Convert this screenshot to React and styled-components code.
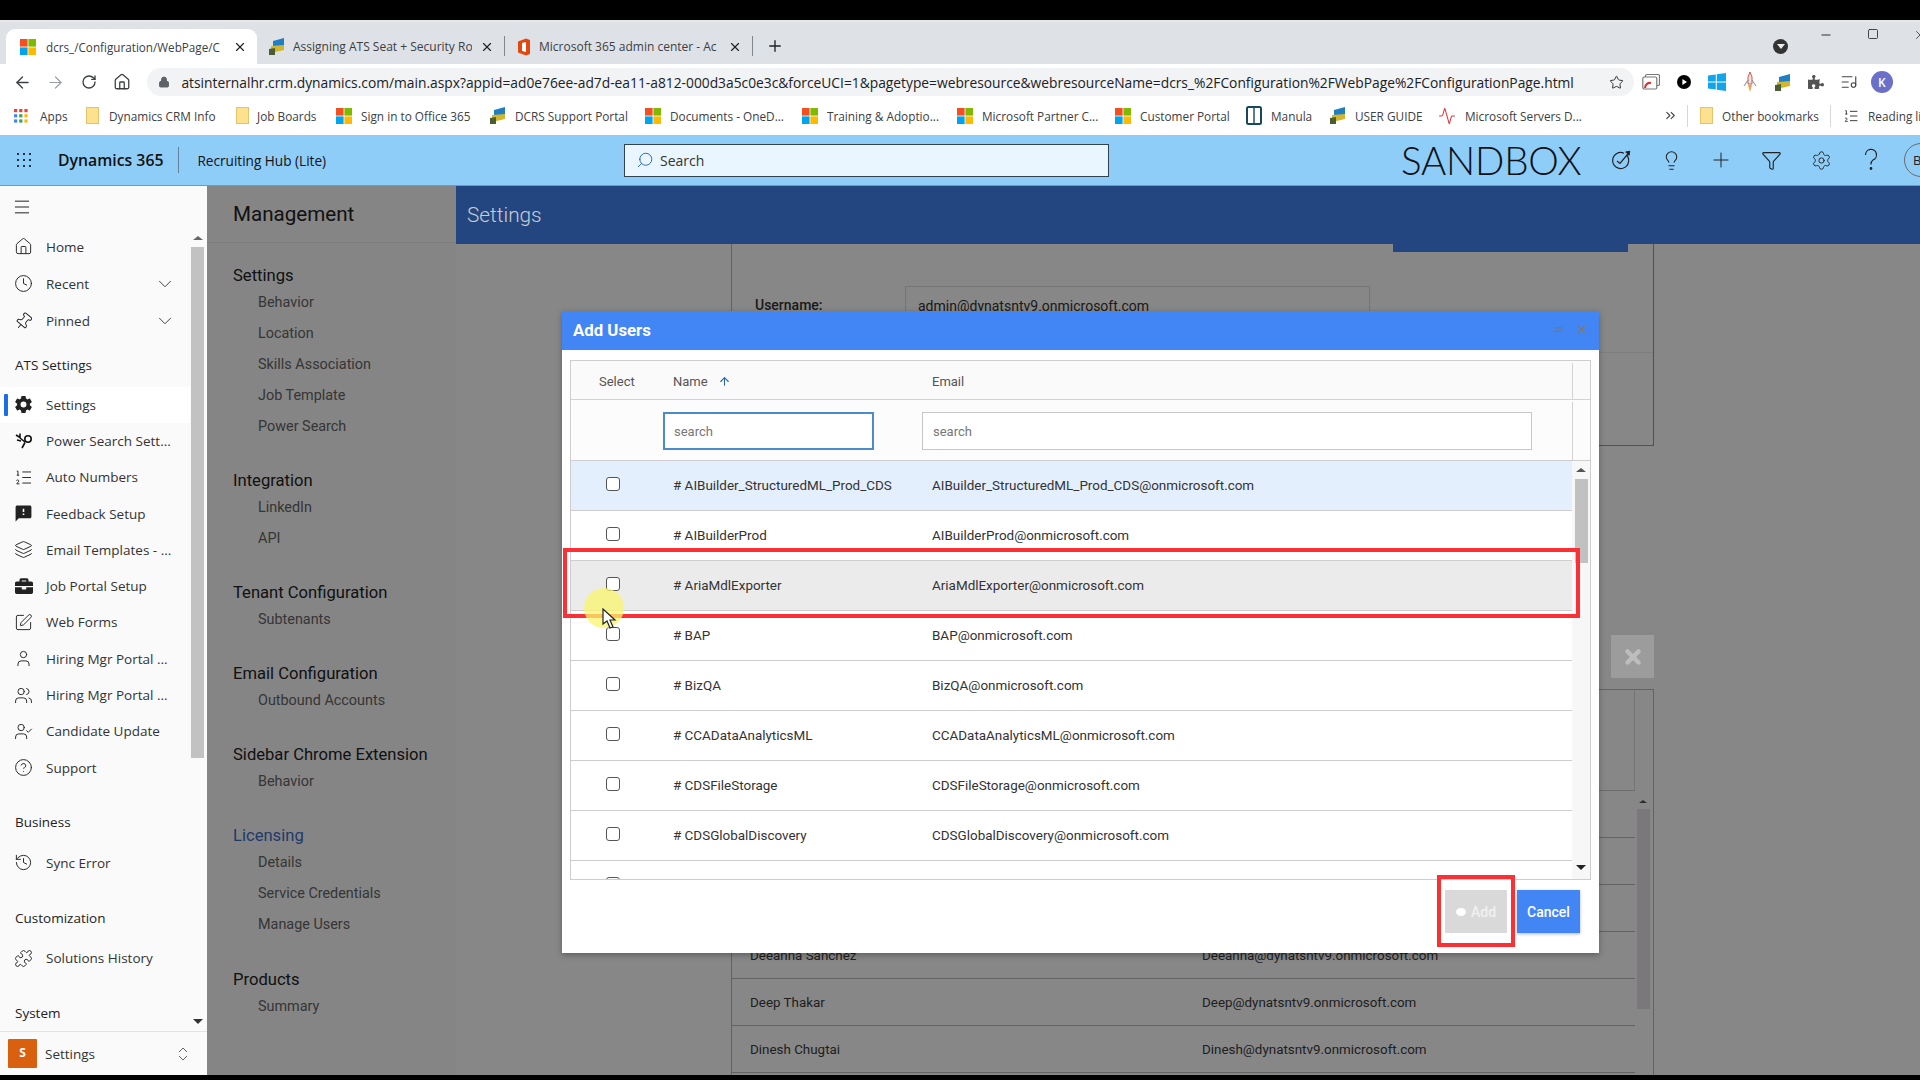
import React from 'react'
import styled, { createGlobalStyle } from 'styled-components'
import {
  Activity, ArrowLeft, ArrowRight, ArrowUp, ChevronDown, ChevronsRight, ChevronsUpDown, CircleHelp, Clock,
  Equal, Funnel, History, House, Layers, Lightbulb, ListMusic, ListOrdered, Lock, Menu, Minus, Pin, Plus, Puzzle,
  RotateCw, Search, Settings, Square, SquarePen, Star, User, UserCheck, Users, X,
} from 'lucide-react'
import { IoSettingsSharp } from 'react-icons/io5'
import { FaBriefcase, FaPuzzlePiece } from 'react-icons/fa'
import { MdFeedback } from 'react-icons/md'

const GlobalStyle = createGlobalStyle`
  html, body { margin: 0; padding: 0; background: #000; }
  * { box-sizing: border-box; }
  input { font: inherit; }
`

const Page = styled.div`
  width: 1920px;
  height: 1080px;
  padding: 20px 0 5px;
  overflow: hidden;
  display: flex;
  flex-direction: column;
  background: #000;
  font-family: 'Open Sans', 'Liberation Sans', sans-serif;
`

/* browser chrome */
const TabStrip = styled.div`
  height: 44px;
  flex-shrink: 0;
  padding-left: 6px;
  display: flex;
  align-items: flex-end;
  background: #dee1e6;
  border-top: 2px solid #e8e8ea;
`
const Tab = styled.div`
  width: ${(p) => p.$w}px;
  height: 35px;
  padding: 0 10px 0 ${(p) => (p.$active ? 14 : 12)}px;
  display: flex;
  align-items: center;
  gap: ${(p) => (p.$active ? 10 : 8)}px;
  font-size: ${(p) => (p.$active ? 11.7 : 12)}px;
  color: #3c4043;
  background: ${(p) => (p.$active ? '#fff' : 'transparent')};
  border-radius: ${(p) => (p.$active ? '9px 9px 0 0' : '0')};
  svg { flex-shrink: 0; }
`
const TabDivider = styled.div`
  width: 1px;
  height: 20px;
  margin-bottom: 8px;
  background: #80868b;
`
const TabTitle = styled.span`
  flex: 1;
  overflow: hidden;
  white-space: nowrap;
`
const NewTab = styled.div`
  margin: 0 0 9px 13px;
  display: flex;
  color: #222;
`
const WindowControls = styled.div`
  margin-left: auto;
  margin-right: -7px;
  align-self: stretch;
  display: flex;
  gap: 34px;
  padding: 6px 0 0;
  color: #333;
`
const ProfileDot = styled.div`
  width: 15px;
  height: 15px;
  margin-top: 11px;
  margin-right: -3px;
  border-radius: 50%;
  background: #333;
  display: flex;
  align-items: center;
  justify-content: center;
  &::after {
    content: '';
    border: 4px solid transparent;
    border-top: 5px solid #eee;
    margin-top: 4px;
  }
`

const Toolbar = styled.div`
  height: 36px;
  flex-shrink: 0;
  padding-left: 6px;
  display: flex;
  align-items: center;
  background: #fff;
`
const NavButton = styled.div`
  width: 33.1px;
  display: flex;
  justify-content: center;
  color: ${(p) => (p.$dim ? '#9aa0a6' : '#3c4043')};
`
const AddressBar = styled.div`
  width: 1487px;
  height: 28px;
  margin-left: 9px;
  padding: 0 10px 0 11px;
  display: flex;
  align-items: center;
  gap: 11px;
  border-radius: 14px;
  background: #f1f3f4;
  color: #5f6368;
`
const UrlText = styled.span`
  flex: 1;
  font-size: 13.8px;
  color: #202124;
  white-space: nowrap;
  overflow: hidden;
`
const ExtensionSlot = styled.div`
  width: 33px;
  display: flex;
  justify-content: center;
  align-items: center;
  color: #444;
  &:first-of-type { margin-left: 10px; }
`
const Avatar = styled.div`
  width: 22px;
  height: 22px;
  border-radius: 50%;
  background: #6a6fc9;
  color: #fff;
  font-size: 12px;
  font-weight: 600;
  display: flex;
  align-items: center;
  justify-content: center;
`

const BookmarkBar = styled.div`
  height: 35px;
  flex-shrink: 0;
  padding: 0 0 4px 14px;
  display: flex;
  align-items: center;
  background: #fff;
`
const Bookmark = styled.div`
  width: ${(p) => p.$w}px;
  flex-shrink: 0;
  margin-left: ${(p) => p.$ml || 0}px;
  display: flex;
  align-items: center;
  gap: ${(p) => p.$gap || 9}px;
  font-size: 11.8px;
  color: #3c4043;
  white-space: nowrap;
  overflow: hidden;
  svg { flex-shrink: 0; }
`
const BarDivider = styled.div`
  width: 1px;
  height: 22px;
  background: #d5d7da;
  flex-shrink: 0;
`
const MoreBookmarks = styled.div`
  width: 24px;
  flex-shrink: 0;
  color: #444;
  display: flex;
`

/* dynamics header */
const AppHeader = styled.header`
  height: 51px;
  flex-shrink: 0;
  display: flex;
  align-items: center;
  background: #8ecdf8;
  border-bottom: 1px solid #5f9fd2;
  color: #111;
`
const Brand = styled.div`
  width: 624px;
  padding-left: 15px;
  display: flex;
  align-items: center;
  flex-shrink: 0;
`
const BrandName = styled.span`
  margin-left: 25px;
  padding-right: 15px;
  font-size: 15.8px;
  font-weight: 600;
  border-right: 1px solid #64839a;
  line-height: 26px;
`
const AppName = styled.span`
  margin-left: 18px;
  font-size: 13.6px;
  white-space: nowrap;
`
const SearchBox = styled.div`
  width: 485px;
  height: 33px;
  flex-shrink: 0;
  padding-left: 11px;
  display: flex;
  align-items: center;
  gap: 6px;
  background: #e9f6ff;
  border: 1px solid #32424f;
  font-size: 14px;
  color: #333;
`
const SandboxLabel = styled.div`
  margin-left: 292px;
  width: 195px;
  flex-shrink: 0;
  font-family: 'Lato', 'Open Sans', sans-serif;
  font-weight: 300;
  font-size: 38.6px;
  letter-spacing: -0.2px;
  color: #0d1116;
  white-space: nowrap;
`
const HeaderIcon = styled.div`
  width: 50px;
  flex-shrink: 0;
  display: flex;
  justify-content: center;
  color: #222;
`
const UserCircle = styled.div`
  width: 34px;
  height: 34px;
  margin-left: 8px;
  flex-shrink: 0;
  padding-left: 8px;
  border: 1px solid #6e6a63;
  border-radius: 50%;
  display: flex;
  align-items: center;
  font-size: 13px;
  color: #222;
`

/* body */
const Body = styled.div`
  flex: 1;
  min-height: 0;
  display: flex;
`
const Sidebar = styled.aside`
  width: 207px;
  flex-shrink: 0;
  position: relative;
  display: flex;
  flex-direction: column;
  background: #fafafa;
  color: #333;
`
const SideNav = styled.nav`
  flex: 1;
  min-height: 0;
  overflow: hidden;
`
const Hamburger = styled.div`
  height: 43px;
  padding: 0 0 2px 12px;
  display: flex;
  align-items: center;
  color: #222;
`
const SideItem = styled.div`
  width: 190px;
  height: ${(p) => p.$h || 36.3}px;
  padding-left: 14px;
  position: relative;
  display: flex;
  align-items: center;
  gap: 13px;
  font-size: 13.5px;
  white-space: nowrap;
  background: ${(p) => (p.$active ? '#fff' : 'transparent')};
  svg { flex-shrink: 0; }
  &::before {
    content: '';
    display: ${(p) => (p.$active ? 'block' : 'none')};
    position: absolute;
    left: 4px;
    top: 7px;
    bottom: 7px;
    width: 4px;
    background: #1a6fe8;
    border-radius: 1px;
  }
`
const SideIcon = styled.span`
  width: 19px;
  display: flex;
  justify-content: center;
  flex-shrink: 0;
  color: #222;
`
const Caret = styled.span`
  margin-left: auto;
  margin-right: 14px;
  display: flex;
  color: #333;
`
const SideHeading = styled.div`
  height: ${(p) => p.$h}px;
  padding: 0 0 ${(p) => p.$pb || 12}px 15px;
  display: flex;
  align-items: flex-end;
  font-size: 13.5px;
  font-weight: 500;
  line-height: 20px;
  color: #222;
`
const SideScrollTrack = styled.div`
  position: absolute;
  left: 191px;
  top: 61px;
  width: 13px;
  height: 511px;
  background: #c2c2c2;
`
const ScrollArrow = styled.div`
  position: absolute;
  left: 193px;
  top: ${(p) => p.$top}px;
  border: 5px solid transparent;
  border-top: ${(p) => (p.$down ? '5px solid #333' : 'none')};
  border-bottom: ${(p) => (p.$down ? 'none' : '4px solid #666')};
`
const AreaSwitch = styled.div`
  height: 44px;
  flex-shrink: 0;
  padding: 0 15px 0 8px;
  display: flex;
  align-items: center;
  gap: 8px;
  font-size: 13.5px;
  border-top: 1px solid #e3e3e3;
  svg { margin-left: auto; }
`
const AreaTile = styled.div`
  width: 29px;
  height: 29px;
  padding-bottom: 3px;
  background: #d9600f;
  border-radius: 1px;
  color: #fff;
  font-size: 12px;
  font-weight: 700;
  display: flex;
  align-items: center;
  justify-content: center;
`

const Workspace = styled.div`
  flex: 1;
  min-width: 0;
  position: relative;
  display: flex;
  font-family: 'Roboto', 'Liberation Sans', sans-serif;
`
const Dimmer = styled.div`
  position: absolute;
  inset: 0;
  z-index: 1;
  background: rgba(0, 0, 0, 0.47);
`
const SubNav = styled.div`
  width: 249px;
  flex-shrink: 0;
  background: #fcfcfc;
  padding-left: 26px;
`
const SubNavTitle = styled.div`
  height: 57px;
  margin-left: -26px;
  padding-left: 26px;
  display: flex;
  align-items: center;
  font-size: 20.6px;
  color: #222;
  border-bottom: 1px solid #ececec;
  margin-bottom: 22px;
`
const SubNavGroup = styled.div`
  margin-bottom: 28.1px;
`
const SubNavHeading = styled.div`
  height: 22px;
  line-height: 22px;
  font-size: 16.6px;
  white-space: nowrap;
  color: ${(p) => (p.$active ? '#3c6fc8' : '#222')};
`
const SubNavItem = styled.div`
  height: 31px;
  line-height: 31px;
  padding-left: 25px;
  font-size: 14.4px;
  color: #666;
`
const Content = styled.div`
  flex: 1;
  min-width: 0;
  display: flex;
  flex-direction: column;
  background: #fff;
`
const TitleBar = styled.div`
  height: 58px;
  flex-shrink: 0;
  padding-left: 11px;
  display: flex;
  align-items: center;
  background: #4285f4;
`
const PageTitle = styled.h1`
  z-index: 2;
  position: relative;
  margin: 0;
  font-size: 20.8px;
  font-weight: 300;
  color: #c9ccd2;
`
const ContentInner = styled.div`
  flex: 1;
  min-height: 0;
  width: 923px;
  margin-left: 275px;
  display: flex;
  flex-direction: column;
  border-left: 1px solid #bcbcbc;
`
const SettingsCard = styled.div`
  height: 202px;
  position: relative;
  display: flex;
  align-items: flex-start;
  padding: 42px 0 0 23px;
  border-right: 1px solid #999;
  border-bottom: 1px solid #999;
  &::after {
    content: '';
    position: absolute;
    left: 0;
    right: 0;
    top: 108px;
    height: 1px;
    background: #eee;
  }
`
const SaveTab = styled.div`
  position: absolute;
  left: 661px;
  top: 0;
  width: 235px;
  height: 8px;
  background: #4285f4;
`
const FieldLabel = styled.div`
  width: 150px;
  font-size: 14px;
  font-weight: 500;
  line-height: 38px;
  color: #333;
`
const FieldValue = styled.div`
  width: 465px;
  height: 80px;
  margin-top: 0;
  padding: 0 12px;
  border: 1px solid #ddd;
  font-size: 14px;
  line-height: 38px;
  color: #333;
`
const ActionRow = styled.div`
  height: 243px;
  flex-shrink: 0;
  display: flex;
  justify-content: flex-end;
  align-items: flex-end;
  padding-bottom: 11px;
`
const RemoveButton = styled.div`
  width: 43px;
  height: 43px;
  position: relative;
  z-index: 2;
  background: #9c9c9c;
  color: #bdbdbd;
  display: flex;
  align-items: center;
  justify-content: center;
`
const UserTable = styled.div`
  flex: 1;
  min-height: 0;
  position: relative;
  overflow: hidden;
  border-top: 1px solid #bbb;
  border-right: 1px solid #bbb;
`
const UserHead = styled.div`
  height: 101px;
  border-bottom: 1px solid #ccc;
  border-right: 1px solid #ddd;
  margin-right: 18px;
`
const UserRow = styled.div`
  height: 47px;
  margin-right: 18px;
  padding-left: 18px;
  display: flex;
  align-items: center;
  font-size: 13.4px;
  color: #3c3c3c;
  border-bottom: 1px solid #bbb;
`
const UserName = styled.span`
  width: 452px;
`
const BackScrollTrack = styled.div`
  position: absolute;
  right: 3px;
  top: 119px;
  width: 13px;
  height: 200px;
  background: #e6e2e6;
  &::before {
    content: '';
    position: absolute;
    left: 2px;
    top: -9px;
    border: 4px solid transparent;
    border-top: none;
    border-bottom: 3px solid #555;
  }
`

/* dialog */
const Modal = styled.div`
  position: absolute;
  left: 355px;
  top: 125px;
  z-index: 2;
  width: 1037px;
  height: 642px;
  background: #fff;
  box-shadow: 0 2px 6px rgba(0, 0, 0, 0.3);
`
const ModalHeader = styled.div`
  height: 39px;
  padding: 0 11px 2px 11px;
  display: flex;
  align-items: center;
  background: #4285f4;
  color: #fff;
`
const ModalTitle = styled.h2`
  flex: 1;
  margin: 0;
  font-size: 16.8px;
  font-weight: 700;
`
const ModalTool = styled.span`
  display: flex;
  margin-left: 10px;
  color: #7a7560;
`
const Grid = styled.div`
  width: 1021px;
  height: 520px;
  margin: 10px 0 0 8px;
  border: 1px solid #cfcdcf;
  overflow: hidden;
`
const GridHead = styled.div`
  height: 39px;
  padding-top: 2px;
  display: grid;
  grid-template-columns: 92px 259px 1fr 18px;
  align-items: center;
  background: #fafafa;
  border-bottom: 1px solid #d4d2d4;
  font-size: 13px;
  color: #555;
`
const HeadCell = styled.div`
  padding-left: ${(p) => p.$pl}px;
  display: flex;
  align-items: center;
  gap: 10px;
  svg { color: #2467b8; }
`
const HeadEnd = styled.div`
  height: 100%;
  border-left: 1px solid #d4d2d4;
`
const FilterRow = styled.div`
  height: 61px;
  padding-top: 2px;
  display: grid;
  grid-template-columns: 92px 259px 1fr 18px;
  align-items: center;
  background: #fcfcfc;
  border-bottom: 1px solid #cfcdcf;
`
const FilterInput = styled.input`
  display: block;
  width: ${(p) => p.$w}px;
  height: 38px;
  padding: 0 ${(p) => (p.$focus ? 9 : 10)}px;
  font-family: 'Roboto', sans-serif;
  font-size: 13px;
  background: #fff;
  color: #666;
  border: ${(p) => (p.$focus ? '2px solid #4a8cca' : '1px solid #c8c6c8')};
  outline: none;
  &::placeholder { color: #777; opacity: 1; }
`
const GridBody = styled.div`
  display: flex;
  height: 419px;
`
const Rows = styled.div`
  flex: 1;
  min-width: 0;
  overflow: hidden;
`
const Row = styled.div`
  height: 50px;
  display: grid;
  grid-template-columns: 92px 259px 1fr;
  align-items: center;
  font-size: 13.45px;
  color: #333;
  border-bottom: 1px solid #cfcdcf;
  background: ${(p) => (p.$selected ? '#e4effd' : p.$hover ? '#ecebeb' : '#fff')};
`
const CheckCell = styled.div`
  padding: 0 0 3px 35px;
  display: flex;
`
const CheckBox = styled.input.attrs({ type: 'checkbox' })`
  appearance: none;
  margin: 0;
  width: 14px;
  height: 14px;
  background: #fff;
  border: 1.5px solid #555;
  border-radius: 3px;
`
const NameCell = styled.div`
  padding-left: 10px;
  white-space: nowrap;
`
const EmailCell = styled.div`
  padding-left: 10px;
  white-space: nowrap;
`
const GridScroll = styled.div`
  width: 18px;
  flex-shrink: 0;
  position: relative;
  background: #f7f7f7;
`
const GridThumb = styled.div`
  position: absolute;
  left: 3px;
  top: 18px;
  width: 13px;
  height: 84px;
  background: #c1c1c1;
`
const GridArrow = styled.div`
  position: absolute;
  left: 4px;
  top: ${(p) => p.$top}px;
  border: 5px solid transparent;
  border-top: ${(p) => (p.$down ? '5px solid #222' : 'none')};
  border-bottom: ${(p) => (p.$down ? 'none' : '4px solid #555')};
`
const ModalFooter = styled.div`
  margin-top: 10px;
  padding-right: 19px;
  display: flex;
  justify-content: flex-end;
  gap: 10px;
`
const FooterButton = styled.button`
  height: 43px;
  width: ${(p) => p.$w}px;
  padding: 0;
  border: none;
  display: flex;
  align-items: center;
  justify-content: center;
  gap: 5px;
  font-family: 'Roboto', sans-serif;
  font-size: 14px;
  font-weight: 500;
  color: ${(p) => (p.$primary ? '#fff' : '#f1f1f1')};
  background: ${(p) => (p.$primary ? '#4285f4' : '#d9d9d9')};
  box-shadow: ${(p) => (p.$primary ? '0 1px 3px rgba(0,0,0,.3)' : 'none')};
`
const AddDot = styled.span`
  width: 10px;
  height: 8px;
  border-radius: 50%;
  background: #fff;
`
const RedMark = styled.div`
  position: absolute;
  left: ${(p) => p.$x}px;
  top: ${(p) => p.$y}px;
  width: ${(p) => p.$w}px;
  height: ${(p) => p.$h}px;
  border: 4px solid #fb3034;
  pointer-events: none;
`
const Highlighter = styled.div`
  position: absolute;
  left: 22px;
  top: 277px;
  width: 40px;
  height: 40px;
  border-radius: 50%;
  background: rgba(250, 245, 110, 0.75);
  pointer-events: none;
`
const Pointer = styled.svg`
  position: absolute;
  left: 40px;
  top: 297px;
`

const MsLogo = ({ size = 16 }) => (
  <svg width={size} height={size} viewBox="0 0 16 16">
    <rect x="0" y="0" width="7.6" height="7.6" fill="#f25022" />
    <rect x="8.4" y="0" width="7.6" height="7.6" fill="#7fba00" />
    <rect x="0" y="8.4" width="7.6" height="7.6" fill="#00a4ef" />
    <rect x="8.4" y="8.4" width="7.6" height="7.6" fill="#ffb900" />
  </svg>
)
const FolderIcon = () => (
  <svg width="13" height="17" viewBox="0 0 13 17">
    <rect x="0.5" y="0.5" width="12" height="16" fill="#fce28f" stroke="#e5c36a" />
  </svg>
)
const DcrsIcon = () => (
  <svg width="16" height="17" viewBox="0 0 16 17">
    <path d="M4 3 L15 0 V10 L4 12 Z" fill="#1f7fc4" />
    <path d="M2 8 L15 7 V12 L2 15 Z" fill="#d1b62e" />
    <path d="M0 11 L6 10 V17 L0 17 Z" fill="#4d5d33" />
  </svg>
)
const OfficeIcon = () => (
  <svg width="14" height="18" viewBox="0 0 14 18">
    <path d="M1 3.5 L9 0.5 L13 2 V16 L9 17.5 L1 14.5 Z" fill="#e3470f" />
    <path d="M5 5 L9 4 V14 L5 13 Z" fill="#fff" />
  </svg>
)
const AppsIcon = () => (
  <svg width="14" height="14" viewBox="0 0 14 14">
    {[
      ['#ea4335', '#ea4335', '#ea4335'],
      ['#4285f4', '#34a853', '#fbbc05'],
      ['#4285f4', '#34a853', '#fbbc05'],
    ].map((line, r) =>
      line.map((c, i) => <rect key={`${r}${i}`} x={i * 5.2} y={r * 5.2} width="3.2" height="3.2" fill={c} />),
    )}
  </svg>
)
const BookIcon = () => (
  <svg width="16" height="19" viewBox="0 0 16 19">
    <rect x="1" y="1" width="14" height="17" rx="1.5" fill="#fff" stroke="#17485c" strokeWidth="2" />
    <path d="M8 2 V17" stroke="#17485c" strokeWidth="1.4" />
  </svg>
)
const WaffleIcon = () => (
  <svg width="18" height="18" viewBox="0 0 18 18" fill="#1c3346">
    {[2, 8, 14].map((y) => [2, 8, 14].map((x) => <rect key={`${x}${y}`} x={x} y={y} width="2" height="2" />))}
  </svg>
)
const TaskIcon = () => (
  <svg width="22" height="22" viewBox="0 0 22 22" fill="none" stroke="#222" strokeWidth="1.2">
    <path d="M16.5 6 A8 8 0 1 1 14 4.2" />
    <path d="M7 12 L10 14.5 L19 3.5" />
    <path d="M15.5 3 L19.5 2.5 L19 6.5" fill="#222" />
  </svg>
)
const PowerSearchIcon = () => (
  <svg width="18" height="18" viewBox="0 0 18 18" fill="none" stroke="#111" strokeWidth="1.6">
    <circle cx="13" cy="7" r="3.2" />
    <path d="M1 3 L5 5.5 M5 1.5 V6 M5 6 L10 10 M2 8 L6 9 M7 16 L10 10.5" />
  </svg>
)
const WindowsIcon = () => (
  <svg width="18" height="18" viewBox="0 0 18 18" fill="#12a5ec">
    <path d="M0 2.5 L7.8 1.4 V8.4 H0 Z M8.8 1.2 L18 0 V8.4 H8.8 Z M0 9.4 H7.8 V16.5 L0 15.4 Z M8.8 9.4 H18 V18 L8.8 16.7 Z" />
  </svg>
)
const RocketIcon = () => (
  <svg width="14" height="20" viewBox="0 0 14 20">
    <path d="M7 0 L9 5 V12 H5 V5 Z" fill="#e9e5e2" stroke="#c4352a" strokeWidth="0.8" />
    <path d="M5 8 L1 14 M9 8 L13 14" stroke="#888" strokeWidth="1" />
    <path d="M5 13 L7 20 L9 13 Z" fill="#f0a040" />
  </svg>
)
const CastIcon = () => (
  <svg width="18" height="18" viewBox="0 0 18 18" fill="none" stroke="#777" strokeWidth="1.2">
    <rect x="3.5" y="1.5" width="14" height="11" rx="1.5" />
    <rect x="0.8" y="4" width="14" height="12" rx="1.5" fill="#fff" />
    <path d="M3 15 A5 5 0 0 1 9 10" stroke="#d33" strokeWidth="2.2" />
  </svg>
)
const PlayDot = () => (
  <svg width="14" height="14" viewBox="0 0 14 14">
    <circle cx="7" cy="7" r="7" fill="#000" />
    <path d="M5.4 4 L10 7 L5.4 10 Z" fill="#fff" />
  </svg>
)
const HelpGlyph = () => (
  <svg width="18" height="24" viewBox="0 0 18 24" fill="none" stroke="#222" strokeWidth="1.2">
    <path d="M3.5 7 A5.5 5.5 0 1 1 11 12 C9.5 13 9 14 9 16.5" />
    <circle cx="9" cy="20.5" r="0.8" fill="#222" />
  </svg>
)

const bookmarks = [
  { w: 72, icon: <AppsIcon />, label: 'Apps', gap: 12 },
  { w: 150, icon: <FolderIcon />, label: 'Dynamics CRM Info', gap: 10 },
  { w: 100, icon: <FolderIcon />, label: 'Job Boards', gap: 8 },
  { w: 154, icon: <MsLogo />, label: 'Sign in to Office 365' },
  { w: 155, icon: <DcrsIcon />, label: 'DCRS Support Portal' },
  { w: 157, icon: <MsLogo />, label: 'Documents - OneD...' },
  { w: 155, icon: <MsLogo />, label: 'Training & Adoptio...' },
  { w: 158, icon: <MsLogo />, label: 'Microsoft Partner C...' },
  { w: 131, icon: <MsLogo />, label: 'Customer Portal' },
  { w: 84, icon: <BookIcon />, label: 'Manula' },
  { w: 108, icon: <DcrsIcon />, label: 'USER GUIDE' },
  { w: 225, icon: <Activity size={18} color="#e2343c" strokeWidth={1.4} />, label: 'Microsoft Servers D...' },
]

const s = { size: 19, strokeWidth: 1.2 }
const sideTop = [
  { icon: <IoSettingsSharp size={19} />, label: 'Settings', active: true },
  { icon: <PowerSearchIcon />, label: 'Power Search Sett...' },
  { icon: <ListOrdered {...s} />, label: 'Auto Numbers' },
  { icon: <MdFeedback size={19} />, label: 'Feedback Setup' },
  { icon: <Layers {...s} />, label: 'Email Templates - ...' },
  { icon: <FaBriefcase size={18} />, label: 'Job Portal Setup' },
  { icon: <SquarePen {...s} />, label: 'Web Forms' },
  { icon: <User {...s} />, label: 'Hiring Mgr Portal ...' },
  { icon: <Users {...s} />, label: 'Hiring Mgr Portal ...' },
  { icon: <UserCheck {...s} />, label: 'Candidate Update' },
  { icon: <CircleHelp {...s} />, label: 'Support' },
]

const subNav = [
  { title: 'Settings', items: ['Behavior', 'Location', 'Skills Association', 'Job Template', 'Power Search'] },
  { title: 'Integration', items: ['LinkedIn', 'API'] },
  { title: 'Tenant Configuration', items: ['Subtenants'] },
  { title: 'Email Configuration', items: ['Outbound Accounts'] },
  { title: 'Sidebar Chrome Extension', items: ['Behavior'] },
  { title: 'Licensing', active: true, items: ['Details', 'Service Credentials', 'Manage Users'] },
  { title: 'Products', items: ['Summary'] },
]

const users = [
  'AIBuilder_StructuredML_Prod_CDS',
  'AIBuilderProd',
  'AriaMdlExporter',
  'BAP',
  'BizQA',
  'CCADataAnalyticsML',
  'CDSFileStorage',
  'CDSGlobalDiscovery',
]

const backUsers = [
  ['', ''],
  ['', ''],
  ['', ''],
  ['Deeanna Sanchez', 'Deeanna@dynatsntv9.onmicrosoft.com'],
  ['Deep Thakar', 'Deep@dynatsntv9.onmicrosoft.com'],
  ['Dinesh Chugtai', 'Dinesh@dynatsntv9.onmicrosoft.com'],
]

const App = () => (
  <Page>
    <GlobalStyle />
    <TabStrip>
      <Tab $w={251} $active>
        <MsLogo />
        <TabTitle>dcrs_/Configuration/WebPage/C</TabTitle>
        <X size={14} color="#222" />
      </Tab>
      <Tab $w={247}>
        <DcrsIcon />
        <TabTitle>Assigning ATS Seat + Security Ro</TabTitle>
        <X size={14} color="#222" />
      </Tab>
      <TabDivider />
      <Tab $w={247}>
        <OfficeIcon />
        <TabTitle>Microsoft 365 admin center - Ac</TabTitle>
        <X size={14} color="#222" />
      </Tab>
      <TabDivider />
      <NewTab>
        <Plus size={18} strokeWidth={1.8} />
      </NewTab>
      <WindowControls>
        <ProfileDot />
        <Minus size={14} strokeWidth={1.8} />
        <Square size={12} strokeWidth={1.8} />
        <X size={14} strokeWidth={1.4} />
      </WindowControls>
    </TabStrip>

    <Toolbar>
      <NavButton><ArrowLeft size={19} strokeWidth={1.7} /></NavButton>
      <NavButton $dim><ArrowRight size={19} strokeWidth={1.5} /></NavButton>
      <NavButton><RotateCw size={16} strokeWidth={2} /></NavButton>
      <NavButton><House size={18} strokeWidth={1.7} /></NavButton>
      <AddressBar>
        <Lock size={12} fill="#5f6368" strokeWidth={1.8} />
        <UrlText>
          atsinternalhr.crm.dynamics.com/main.aspx?appid=ad0e76ee-ad7d-ea11-a812-000d3a5c0e3c&amp;forceUCI=1&amp;pagetype=webresource&amp;webresourceName=dcrs_%2FConfiguration%2FWebPage%2FConfigurationPage.html
        </UrlText>
        <Star size={15} color="#333" strokeWidth={1.6} />
      </AddressBar>
      <ExtensionSlot><CastIcon /></ExtensionSlot>
      <ExtensionSlot><PlayDot /></ExtensionSlot>
      <ExtensionSlot><WindowsIcon /></ExtensionSlot>
      <ExtensionSlot><RocketIcon /></ExtensionSlot>
      <ExtensionSlot><DcrsIcon /></ExtensionSlot>
      <ExtensionSlot><FaPuzzlePiece size={16} color="#555" /></ExtensionSlot>
      <ExtensionSlot><ListMusic size={18} strokeWidth={1.5} /></ExtensionSlot>
      <ExtensionSlot><Avatar>K</Avatar></ExtensionSlot>
    </Toolbar>

    <BookmarkBar>
      {bookmarks.map((b) => (
        <Bookmark key={b.label} $w={b.w} $gap={b.gap}>
          {b.icon}
          {b.label}
        </Bookmark>
      ))}
      <MoreBookmarks><ChevronsRight size={15} strokeWidth={1.8} /></MoreBookmarks>
      <BarDivider />
      <Bookmark $w={130} $ml={12} $gap={9}>
        <FolderIcon />
        Other bookmarks
      </Bookmark>
      <BarDivider />
      <Bookmark $w={100} $ml={12} $gap={9}>
        <ListOrdered size={16} strokeWidth={1.5} />
        Reading list
      </Bookmark>
    </BookmarkBar>

    <AppHeader>
      <Brand>
        <WaffleIcon />
        <BrandName>Dynamics 365</BrandName>
        <AppName>Recruiting Hub (Lite)</AppName>
      </Brand>
      <SearchBox>
        <Search size={18} strokeWidth={1.2} color="#1f5fa8" style={{ transform: 'scaleX(-1)' }} />
        Search
      </SearchBox>
      <SandboxLabel>SANDBOX</SandboxLabel>
      <HeaderIcon><TaskIcon /></HeaderIcon>
      <HeaderIcon><Lightbulb size={21} strokeWidth={1.2} /></HeaderIcon>
      <HeaderIcon><Plus size={24} strokeWidth={1} /></HeaderIcon>
      <HeaderIcon><Funnel size={21} strokeWidth={1.3} /></HeaderIcon>
      <HeaderIcon><Settings size={21} strokeWidth={1.1} /></HeaderIcon>
      <HeaderIcon><HelpGlyph /></HeaderIcon>
      <UserCircle>B</UserCircle>
    </AppHeader>

    <Body>
      <Sidebar>
        <SideNav>
          <Hamburger><Menu size={20} strokeWidth={1.2} /></Hamburger>
          <SideItem $h={35.5}>
            <SideIcon><House {...s} /></SideIcon>
            Home
          </SideItem>
          <SideItem $h={38}>
            <SideIcon><Clock {...s} /></SideIcon>
            Recent
            <Caret><ChevronDown size={22} strokeWidth={1} /></Caret>
          </SideItem>
          <SideItem $h={37}>
            <SideIcon><Pin {...s} style={{ transform: 'rotate(40deg)' }} /></SideIcon>
            Pinned
            <Caret><ChevronDown size={22} strokeWidth={1} /></Caret>
          </SideItem>
          <SideHeading $h={47}>ATS Settings</SideHeading>
          {sideTop.map((item, i) => (
            <SideItem key={i} $active={item.active}>
              <SideIcon>{item.icon}</SideIcon>
              {item.label}
            </SideItem>
          ))}
          <SideHeading $h={59} $pb={13}>Business</SideHeading>
          <SideItem>
            <SideIcon><History {...s} /></SideIcon>
            Sync Error
          </SideItem>
          <SideHeading $h={59} $pb={12}>Customization</SideHeading>
          <SideItem>
            <SideIcon><Puzzle {...s} /></SideIcon>
            Solutions History
          </SideItem>
          <SideHeading $h={61} $pb={14}>System</SideHeading>
        </SideNav>
        <ScrollArrow $top={50} />
        <SideScrollTrack />
        <ScrollArrow $top={833} $down />
        <AreaSwitch>
          <AreaTile>S</AreaTile>
          Settings
          <ChevronsUpDown size={18} strokeWidth={1} />
        </AreaSwitch>
      </Sidebar>

      <Workspace>
        <SubNav>
          <SubNavTitle>Management</SubNavTitle>
          {subNav.map((group) => (
            <SubNavGroup key={group.title}>
              <SubNavHeading $active={group.active}>{group.title}</SubNavHeading>
              {group.items.map((item) => (
                <SubNavItem key={item}>{item}</SubNavItem>
              ))}
            </SubNavGroup>
          ))}
        </SubNav>

        <Content>
          <TitleBar>
            <PageTitle>Settings</PageTitle>
          </TitleBar>
          <ContentInner>
            <SettingsCard>
              <SaveTab />
              <FieldLabel>Username:</FieldLabel>
              <FieldValue>admin@dynatsntv9.onmicrosoft.com</FieldValue>
            </SettingsCard>
            <ActionRow>
              <RemoveButton><X size={22} strokeWidth={5} /></RemoveButton>
            </ActionRow>
            <UserTable>
              <UserHead />
              {backUsers.map(([name, mail], i) => (
                <UserRow key={i}>
                  <UserName>{name}</UserName>
                  {mail}
                </UserRow>
              ))}
              <BackScrollTrack />
            </UserTable>
          </ContentInner>
        </Content>

        <Dimmer />

        <Modal>
          <ModalHeader>
            <ModalTitle>Add Users</ModalTitle>
            <ModalTool><Equal size={13} strokeWidth={1.6} /></ModalTool>
            <ModalTool><X size={13} strokeWidth={1.6} /></ModalTool>
          </ModalHeader>
          <Grid>
            <GridHead>
              <HeadCell $pl={28}>Select</HeadCell>
              <HeadCell $pl={10}>
                Name
                <ArrowUp size={13} strokeWidth={2} />
              </HeadCell>
              <HeadCell $pl={10}>Email</HeadCell>
              <HeadEnd />
            </GridHead>
            <FilterRow>
              <span />
              <FilterInput $w={211} $focus placeholder="search" readOnly />
              <FilterInput $w={610} placeholder="search" readOnly />
              <HeadEnd />
            </FilterRow>
            <GridBody>
              <Rows>
                {users.map((name, i) => (
                  <Row key={name} $selected={i === 0} $hover={i === 2}>
                    <CheckCell><CheckBox readOnly /></CheckCell>
                    <NameCell># {name}</NameCell>
                    <EmailCell>{name}@onmicrosoft.com</EmailCell>
                  </Row>
                ))}
                <Row>
                  <CheckCell><CheckBox readOnly /></CheckCell>
                </Row>
              </Rows>
              <GridScroll>
                <GridArrow $top={7} />
                <GridThumb />
                <GridArrow $top={404} $down />
              </GridScroll>
            </GridBody>
          </Grid>
          <ModalFooter>
            <FooterButton $w={62}>
              <AddDot />
              Add
            </FooterButton>
            <FooterButton $w={63} $primary>Cancel</FooterButton>
          </ModalFooter>
          <RedMark $x={1} $y={237} $w={1017} $h={70} />
          <RedMark $x={875} $y={564} $w={78} $h={72} />
          <Highlighter />
          <Pointer width="15" height="22" viewBox="0 0 15 22">
            <path d="M1 1 L1 16 L5 13 L8 20 L11 19 L8 12 L13 12 Z" fill="#fff" stroke="#222" strokeWidth="1.2" />
          </Pointer>
        </Modal>
      </Workspace>
    </Body>
  </Page>
)

export default App
